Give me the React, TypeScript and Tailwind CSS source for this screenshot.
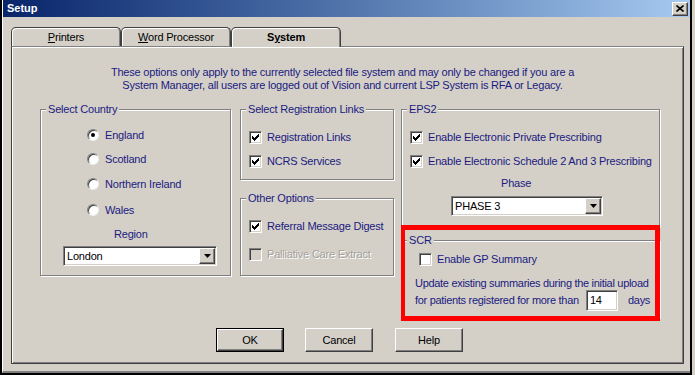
import type { ReactNode } from "react"

// classic win2000 bevels
const sunken =
  "border border-t-[#808080] border-l-[#808080] border-r-white border-b-white shadow-[inset_1px_1px_0_#404040,inset_-1px_-1px_0_#d4d0c8]"
const raised =
  "border border-t-white border-l-white border-r-[#404040] border-b-[#404040] shadow-[inset_-1px_-1px_0_#808080]"
const navy = "text-[#1a1a80]"

function CheckMark() {
  const cols = [2, 3, 4, 3, 2, 1, 0]
  return (
    <svg width="7" height="7" viewBox="0 0 7 7" shapeRendering="crispEdges" aria-hidden>
      {cols.map((y, x) => (
        <rect key={x} x={x} y={y} width="1" height="3" fill="#000" />
      ))}
    </svg>
  )
}

function CheckBox({ checked, disabled }: { checked?: boolean; disabled?: boolean }) {
  return (
    <span
      className={`flex h-[13px] w-[13px] shrink-0 items-center justify-center ${sunken} ${
        disabled ? "bg-[#d4d0c8]" : "bg-white"
      }`}
    >
      {checked && <CheckMark />}
    </span>
  )
}

function CheckRow({
  label,
  checked,
  disabled,
  className = "",
}: {
  label: string
  checked?: boolean
  disabled?: boolean
  className?: string
}) {
  return (
    <div className={`flex h-4 items-center ${className}`}>
      <CheckBox checked={checked} disabled={disabled} />
      <span
        className={`ml-[5px] whitespace-nowrap ${
          disabled ? "text-[#a4a09a] [text-shadow:1px_1px_0_#fff]" : navy
        }`}
      >
        {label}
      </span>
    </div>
  )
}

function Radio({ label, checked, className = "" }: { label: string; checked?: boolean; className?: string }) {
  return (
    <div className={`flex h-4 items-center ${className}`}>
      <span className="flex h-[12px] w-[12px] shrink-0 items-center justify-center rounded-full border border-t-[#808080] border-l-[#808080] border-r-[#eeeeee] border-b-[#eeeeee] bg-white shadow-[inset_1px_1px_0_#404040]">
        {checked && <span className="h-[4px] w-[4px] rounded-full bg-black" />}
      </span>
      <span className={`ml-[6px] whitespace-nowrap ${navy}`}>{label}</span>
    </div>
  )
}

function Group({ label, className = "", children }: { label: string; className?: string; children?: ReactNode }) {
  return (
    <div
      className={`relative border border-[#808080] shadow-[inset_1px_1px_0_#fff,1px_1px_0_#fff] ${className}`}
    >
      <span className={`absolute left-[5px] top-[-7px] bg-[#d4d0c8] px-[2px] leading-[13px] ${navy}`}>
        {label}
      </span>
      {children}
    </div>
  )
}

function Combo({ value, className = "" }: { value: string; className?: string }) {
  return (
    <div className={`flex h-[20px] bg-white ${sunken} ${className}`}>
      <span className="flex-1 pl-[3px] leading-[18px] text-black">{value}</span>
      <span className={`m-[1px] flex w-[16px] items-center justify-center bg-[#d4d0c8] ${raised}`}>
        <svg width="7" height="4" viewBox="0 0 7 4" aria-hidden>
          <path d="M0 0h7L3.5 4z" fill="#000" />
        </svg>
      </span>
    </div>
  )
}

function Button({ label, isDefault, className = "" }: { label: string; isDefault?: boolean; className?: string }) {
  return (
    <div className={`h-[24px] w-[68px] ${isDefault ? "border border-black" : ""} ${className}`}>
      <div className={`flex h-full w-full items-center justify-center bg-[#d4d0c8] text-black ${raised}`}>
        {label}
      </div>
    </div>
  )
}

function Tab({ children, selected }: { children: ReactNode; selected?: boolean }) {
  return (
    <div
      className={`flex w-[110px] items-center justify-center rounded-t-[5px] border border-b-0 border-[#404040] bg-[#d4d0c8] shadow-[inset_1px_1px_0_#fff,inset_-1px_0_0_#808080] text-black ${
        selected ? "relative z-10 -mb-[1px] h-[20px] font-bold" : "h-[19px]"
      }`}
    >
      {children}
    </div>
  )
}

export default function App() {
  return (
    <div className="h-[375px] w-[695px] overflow-hidden bg-[#d4d0c8] font-['Liberation_Sans',Arial,sans-serif] text-[11px] leading-[13px] tracking-[-0.2px]">
      <div className="flex h-[375px] w-[692px] flex-col border-x-2 border-b-2 border-black">
        <div className="flex flex-1 flex-col border-b-2 border-l border-b-[#808080] border-l-white">
          {/* title bar */}
          <div className="flex h-[17px] shrink-0 items-center justify-between bg-linear-to-r from-[#0a246a] to-[#a6caf0] pl-[4px] pr-[2px]">
            <span className="font-bold tracking-normal text-white">Setup</span>
            <span className={`flex h-[14px] w-[16px] items-center justify-center bg-[#d4d0c8] ${raised}`}>
              <svg width="8" height="7" viewBox="0 0 8 7" aria-hidden>
                <path d="M0.5 0.5l7 6M7.5 0.5l-7 6" stroke="#000" strokeWidth="1.6" />
              </svg>
            </span>
          </div>

          {/* tabs */}
          <div className="ml-[8px] mt-[10px] flex h-[19px] items-end">
            <Tab>
              <span>
                <span className="underline">P</span>rinters
              </span>
            </Tab>
            <Tab>
              <span>
                <span className="underline">W</span>ord Processor
              </span>
            </Tab>
            <Tab selected>
              <span>
                S<span className="underline">y</span>stem
              </span>
            </Tab>
          </div>

          {/* tab page */}
          <div className="ml-[8px] flex h-[318px] w-[673px] flex-col border border-[#404040] border-t-[#808080] pt-[19px] shadow-[inset_1px_1px_0_#fff,inset_-1px_-1px_0_#808080]">
            <div className={`w-[661px] text-center ${navy}`}>
              <p>These options only apply to the currently selected file system and may only be changed if you are a</p>
              <p>System Manager, all users are logged out of Vision and current LSP System is RFA or Legacy.</p>
            </div>

            <div className="mt-[17px] flex items-start pl-[28px]">
              {/* Select Country */}
              <Group label="Select Country" className="h-[167px] w-[191px]">
                <div className="flex flex-col pl-[46px] pt-[17px]">
                  <Radio label="England" checked />
                  <Radio label="Scotland" className="mt-[8px]" />
                  <Radio label="Northern Ireland" className="mt-[9px]" />
                  <Radio label="Wales" className="mt-[10px]" />
                </div>
                <p className={`ml-[73px] mt-[10px] ${navy}`}>Region</p>
                <Combo value="London" className="ml-[22px] mt-[5px] w-[154px]" />
              </Group>

              {/* middle column */}
              <div className="ml-[9px] flex w-[154px] flex-col">
                <Group label="Select Registration Links" className="h-[71px]">
                  <div className="flex flex-col pl-[8px] pt-[19px]">
                    <CheckRow label="Registration Links" checked />
                    <CheckRow label="NCRS Services" checked className="mt-[8px]" />
                  </div>
                </Group>
                <Group label="Other Options" className="mt-[18px] h-[78px]">
                  <div className="flex flex-col pl-[8px] pt-[19px]">
                    <CheckRow label="Referral Message Digest" checked />
                    <CheckRow label="Palliative Care Extract" disabled className="mt-[12px]" />
                  </div>
                </Group>
              </div>

              {/* EPS2 + SCR */}
              <div className="relative ml-[7px] flex w-[259px] flex-col">
                <Group label="EPS2" className="h-[118px]">
                  <div className="flex flex-col pl-[8px] pt-[19px]">
                    <CheckRow label="Enable Electronic Private Prescribing" checked />
                    <CheckRow label="Enable Electronic Schedule 2 And 3 Prescribing" checked className="mt-[8px]" />
                  </div>
                  <p className={`ml-[99px] mt-[8px] ${navy}`}>Phase</p>
                  <Combo value="PHASE 3" className="ml-[49px] mt-[6px] w-[152px]" />
                </Group>
                <Group label="SCR" className="mt-[13px] h-[78px]">
                  <div className="pl-[17px] pt-[10px]">
                    <CheckRow label="Enable GP Summary" />
                  </div>
                  <div className={`mt-[10px] pl-[13px] tracking-[-0.3px] ${navy}`}>
                    <p className="whitespace-nowrap">Update existing summaries during the initial upload</p>
                    <div className="flex h-[21px] items-center">
                      <span className="w-[171px] whitespace-nowrap">for patients registered for more than</span>
                      <span className={`flex h-[21px] w-[32px] items-center bg-white pl-[3px] text-black ${sunken}`}>
                        14
                      </span>
                      <span className="ml-[10px]">days</span>
                    </div>
                  </div>
                </Group>
                {/* red highlight drawn over the screenshot */}
                <div className="pointer-events-none absolute left-0 top-[116px] h-[96px] w-[259px] border-[5px] border-l-4 border-[#ff0000]" />
              </div>
            </div>

            <div className="mt-[10px] flex pl-[204px]">
              <Button label="OK" isDefault />
              <Button label="Cancel" className="ml-[21px]" />
              <Button label="Help" className="ml-[22px]" />
            </div>
          </div>
        </div>
      </div>
    </div>
  )
}
